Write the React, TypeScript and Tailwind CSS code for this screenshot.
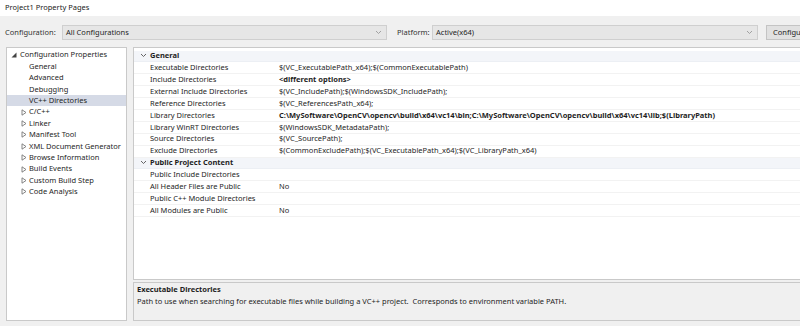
import React from "react";

const ExpandedTri = () => (
  <svg width="6" height="6" viewBox="0 0 6 6" className="shrink-0">
    <path d="M5.5 0.5 L5.5 5.5 L0.5 5.5 Z" fill="#444" />
  </svg>
);

const CollapsedTri = () => (
  <svg width="6" height="7" viewBox="0 0 6 7" className="shrink-0">
    <path d="M1 0.8 L5 3.5 L1 6.2 Z" fill="none" stroke="#777" strokeWidth="0.9" />
  </svg>
);

const Chevron = ({ color = "#666" }: { color?: string }) => (
  <svg width="7" height="5" viewBox="0 0 7 5" className="shrink-0">
    <path d="M1 1 L3.5 3.5 L6 1" fill="none" stroke={color} strokeWidth="0.9" />
  </svg>
);

const treeItems: { label: string; kind: "root" | "leaf" | "coll"; selected?: boolean }[] = [
  { label: "Configuration Properties", kind: "root" },
  { label: "General", kind: "leaf" },
  { label: "Advanced", kind: "leaf" },
  { label: "Debugging", kind: "leaf" },
  { label: "VC++ Directories", kind: "leaf", selected: true },
  { label: "C/C++", kind: "coll" },
  { label: "Linker", kind: "coll" },
  { label: "Manifest Tool", kind: "coll" },
  { label: "XML Document Generator", kind: "coll" },
  { label: "Browse Information", kind: "coll" },
  { label: "Build Events", kind: "coll" },
  { label: "Custom Build Step", kind: "coll" },
  { label: "Code Analysis", kind: "coll" },
];

type Row =
  | { type: "header"; label: string }
  | { type: "prop"; name: string; value?: string; bold?: boolean };

const rows: Row[] = [
  { type: "header", label: "General" },
  { type: "prop", name: "Executable Directories", value: "$(VC_ExecutablePath_x64);$(CommonExecutablePath)" },
  { type: "prop", name: "Include Directories", value: "<different options>", bold: true },
  { type: "prop", name: "External Include Directories", value: "$(VC_IncludePath);$(WindowsSDK_IncludePath);" },
  { type: "prop", name: "Reference Directories", value: "$(VC_ReferencesPath_x64);" },
  {
    type: "prop",
    name: "Library Directories",
    value:
      "C:\\MySoftware\\OpenCV\\opencv\\build\\x64\\vc14\\bin;C:\\MySoftware\\OpenCV\\opencv\\build\\x64\\vc14\\lib;$(LibraryPath)",
    bold: true,
  },
  { type: "prop", name: "Library WinRT Directories", value: "$(WindowsSDK_MetadataPath);" },
  { type: "prop", name: "Source Directories", value: "$(VC_SourcePath);" },
  { type: "prop", name: "Exclude Directories", value: "$(CommonExcludePath);$(VC_ExecutablePath_x64);$(VC_LibraryPath_x64)" },
  { type: "header", label: "Public Project Content" },
  { type: "prop", name: "Public Include Directories", value: "" },
  { type: "prop", name: "All Header Files are Public", value: "No" },
  { type: "prop", name: "Public C++ Module Directories", value: "" },
  { type: "prop", name: "All Modules are Public", value: "No" },
];

export default function App() {
  return (
    <div className="w-[800px] h-[326px] overflow-hidden bg-[#f0f0f0] text-[7.5px] leading-none text-[#1e1e1e] font-['Noto_Sans',sans-serif]">
      {/* title */}
      <div className="h-[16px] bg-white flex items-center pl-[5px] text-[#222]">Project1 Property Pages</div>

      {/* config row */}
      <div className="h-[31px] flex items-start pt-[9px] pl-[5px] whitespace-nowrap">
        <div className="w-[57px] shrink-0 h-[15px] flex items-center text-[#333]">Configuration:</div>
        <div className="w-[325px] shrink-0 h-[15px] flex items-center justify-between bg-[#e6e6e6] border border-[#cfcfcf] pl-[3px] pr-[4px]">
          <span>All Configurations</span>
          <Chevron color="#999" />
        </div>
        <div className="w-[35px] shrink-0 ml-[10px] h-[15px] flex items-center text-[#333]">Platform:</div>
        <div className="w-[326px] shrink-0 h-[15px] flex items-center justify-between bg-[#e6e6e6] border border-[#cfcfcf] pl-[3px] pr-[4px]">
          <span>Active(x64)</span>
          <Chevron color="#999" />
        </div>
        <div className="ml-[8px] w-[90px] h-[15px] flex items-center bg-[#e1e1e1] border border-[#c4c4c4] pl-[6px] shrink-0">
          Configuration Manager...
        </div>
      </div>

      {/* body */}
      <div className="flex h-[274px] pl-[6px] gap-[6px]">
        {/* tree */}
        <div className="w-[121px] shrink-0 bg-white border border-[#c9c9c9] pt-[1.5px] whitespace-nowrap">
          {treeItems.map((t) => (
            <div
              key={t.label}
              className={`h-[11.4px] flex items-center ${t.selected ? "bg-[#d5dae6]" : ""}`}
            >
              {t.kind === "root" && (
                <>
                  <span className="w-[4px]" />
                  <ExpandedTri />
                  <span className="ml-[3px]">{t.label}</span>
                </>
              )}
              {t.kind === "leaf" && <span className="ml-[22px]">{t.label}</span>}
              {t.kind === "coll" && (
                <>
                  <span className="w-[14px]" />
                  <CollapsedTri />
                  <span className="ml-[2px]">{t.label}</span>
                </>
              )}
            </div>
          ))}
        </div>

        {/* right */}
        <div className="flex-1 flex flex-col gap-[2px] mr-[-10px]">
          <div className="flex-1 bg-white border border-[#c9c9c9] pt-[2.5px] whitespace-nowrap overflow-hidden">
            {rows.map((r, i) =>
              r.type === "header" ? (
                <div key={i} className="h-[11.9px] flex items-center bg-[#f3f5f9] border-b border-[#eceff4]">
                  <span className="w-[16px] flex justify-center pl-[2px]">
                    <Chevron color="#555" />
                  </span>
                  <span className="font-bold">{r.label}</span>
                </div>
              ) : (
                <div key={i} className="h-[11.9px] flex items-center border-b border-[#f2f2f2]">
                  <span className="w-[16px] shrink-0" />
                  <span className="w-[129px] shrink-0">{r.name}</span>
                  <span className={r.bold ? "font-bold" : ""}>{r.value}</span>
                </div>
              )
            )}
          </div>
          <div className="h-[39px] shrink-0 bg-[#f0f0f0] border border-[#c9c9c9] pl-[3px] pt-[1px] whitespace-nowrap">
            <div className="h-[12px] flex items-center font-bold">Executable Directories</div>
            <div className="h-[12px] flex items-center">
              Path to use when searching for executable files while building a VC++ project.&nbsp; Corresponds to environment variable PATH.
            </div>
          </div>
        </div>
      </div>
    </div>
  );
}
